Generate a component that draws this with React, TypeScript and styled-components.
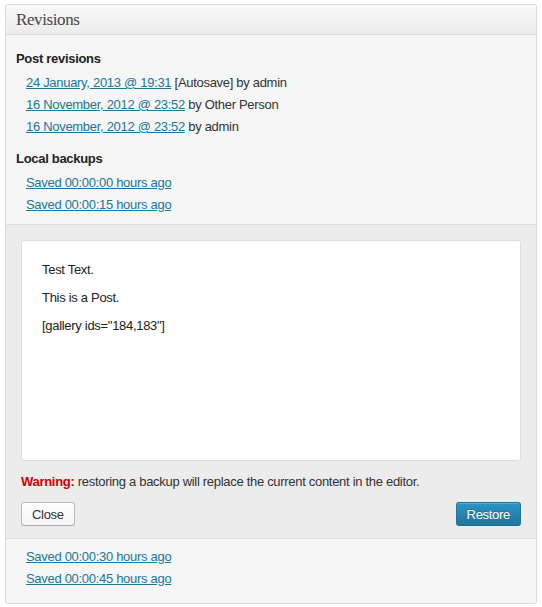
import React from 'react';
import styled, { createGlobalStyle } from 'styled-components';

const GlobalStyle = createGlobalStyle`
  body {
    margin: 0;
    background: #fff;
    font-family: 'Liberation Sans', Arial, sans-serif;
    font-size: 13px;
    letter-spacing: -0.3px;
    color: #333;
  }
`;

const Panel = styled.div`
  margin: 4px 0 0 5px;
  width: 532px;
  box-sizing: border-box;
  border: 1px solid #dcdcdc;
  border-radius: 3px;
  background: #f5f5f5;
  overflow: hidden;
`;

const Header = styled.div`
  height: 30px;
  box-sizing: border-box;
  padding: 0 10px;
  display: flex;
  align-items: center;
  background: linear-gradient(#f9f9f9, #ececec);
  border-bottom: 1px solid #dfdfdf;
`;

const Title = styled.h3`
  margin: 0;
  font-family: 'Liberation Serif', Georgia, serif;
  font-size: 17px;
  letter-spacing: -0.4px;
  font-weight: normal;
  color: #464646;
`;

const Section = styled.div<{ $top?: number; $bottom?: number }>`
  padding: ${(p) => p.$top ?? 15}px 10px ${(p) => p.$bottom ?? 8}px;
  background: #f6f6f6;
`;

const GroupTitle = styled.h4<{ $gap?: number }>`
  margin: ${(p) => p.$gap ?? 0}px 0 4px;
  font-size: 13px;
  line-height: 18px;
  font-weight: bold;
  color: #222;
`;

const List = styled.ul`
  margin: 0;
  padding: 0 0 0 10px;
  list-style: none;
`;

const Item = styled.li`
  line-height: 22px;
  color: #333;
`;

const Link = styled.a`
  color: #21759b;
  text-decoration: underline;
  cursor: pointer;
`;

const Preview = styled.div`
  background: #ececec;
  border-top: 1px solid #dfdfdf;
  border-bottom: 1px solid #dfdfdf;
  padding: 15px 15px 12px;
`;

const ContentBox = styled.div`
  height: 221px;
  box-sizing: border-box;
  background: #fff;
  border: 1px solid #dcdcdc;
  border-radius: 3px;
  padding: 20px 20px;
`;

const Para = styled.p`
  margin: 0 0 10px;
  line-height: 18px;
  color: #222;
`;

const Warning = styled.p`
  margin: 12px 0 11px;
  line-height: 18px;
  color: #333;

  strong {
    color: #c00;
  }
`;

const Actions = styled.div`
  display: flex;
  justify-content: space-between;
`;

const Button = styled.button<{ $primary?: boolean }>`
  height: 24px;
  padding: 0 10px;
  font-family: 'Liberation Sans', Arial, sans-serif;
  font-size: 13px;
  letter-spacing: -0.3px;
  border-radius: 3px;
  cursor: pointer;
  border: 1px solid ${(p) => (p.$primary ? '#21759b' : '#bbb')};
  border-bottom-color: ${(p) => (p.$primary ? '#1e6a8d' : '#aaa')};
  background: ${(p) =>
    p.$primary
      ? 'linear-gradient(#2a95c5, #21759b)'
      : 'linear-gradient(#fefefe, #f4f4f4)'};
  color: ${(p) => (p.$primary ? '#fff' : '#333')};
  text-shadow: ${(p) => (p.$primary ? '0 -1px 0 rgba(0,0,0,0.2)' : 'none')};
  box-shadow: ${(p) =>
    p.$primary ? 'inset 0 1px 0 rgba(120,200,230,0.5)' : 'inset 0 1px 0 #fff'};
`;

const revisions = [
  { date: '24 January, 2013 @ 19:31', note: '[Autosave] by admin' },
  { date: '16 November, 2012 @ 23:52', note: 'by Other Person' },
  { date: '16 November, 2012 @ 23:52', note: 'by admin' },
];

const App = () => {
  return (
    <>
      <GlobalStyle />
      <Panel>
        <Header>
          <Title>Revisions</Title>
        </Header>

        <Section>
          <GroupTitle>Post revisions</GroupTitle>
          <List>
            {revisions.map((r, i) => (
              <Item key={i}>
                <Link>{r.date}</Link> {r.note}
              </Item>
            ))}
          </List>

          <GroupTitle $gap={12}>Local backups</GroupTitle>
          <List>
            <Item>
              <Link>Saved 00:00:00 hours ago</Link>
            </Item>
            <Item>
              <Link>Saved 00:00:15 hours ago</Link>
            </Item>
          </List>
        </Section>

        <Preview>
          <ContentBox>
            <Para>Test Text.</Para>
            <Para>This is a Post.</Para>
            <Para>[gallery ids="184,183"]</Para>
          </ContentBox>
          <Warning>
            <strong>Warning:</strong> restoring a backup will replace the current content in the editor.
          </Warning>
          <Actions>
            <Button>Close</Button>
            <Button $primary>Restore</Button>
          </Actions>
        </Preview>

        <Section $top={7} $bottom={13}>
          <List>
            <Item>
              <Link>Saved 00:00:30 hours ago</Link>
            </Item>
            <Item>
              <Link>Saved 00:00:45 hours ago</Link>
            </Item>
          </List>
        </Section>
      </Panel>
    </>
  );
};

export default App;
